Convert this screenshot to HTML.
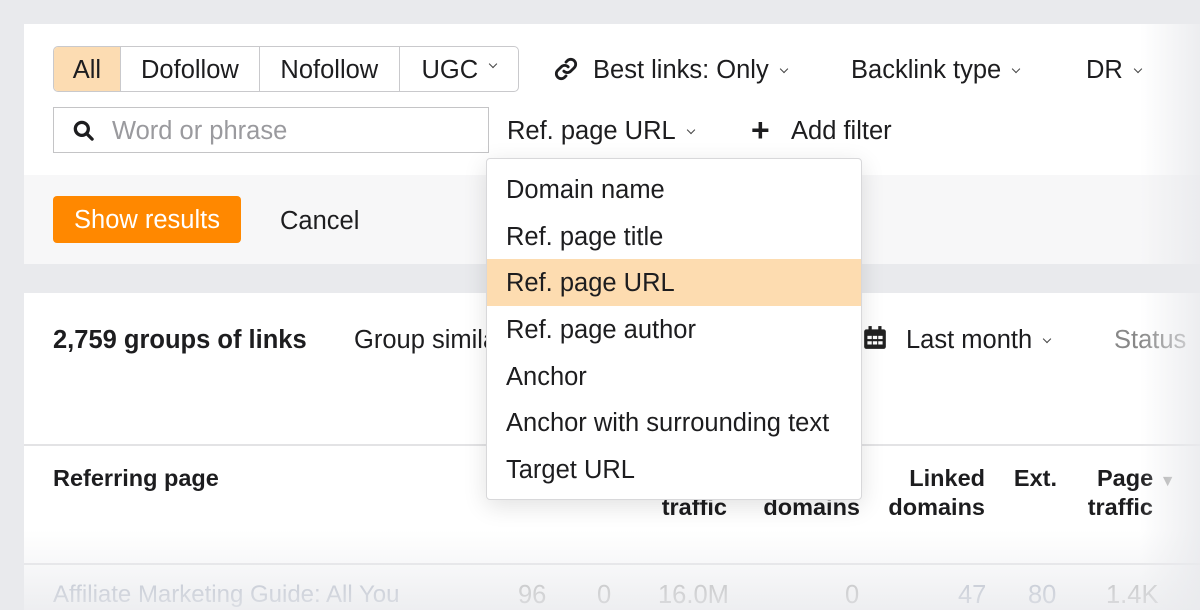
<!DOCTYPE html>
<html><head><meta charset="utf-8"><style>
*{box-sizing:border-box;margin:0;padding:0}
body{width:1200px;height:610px;overflow:hidden;background:#e9eaed;font-family:"Liberation Sans",sans-serif;color:#1d1d1f;position:relative;font-size:25.5px}
.abs{position:absolute;white-space:nowrap}
.p1{position:absolute;left:24px;top:24px;width:1176px;height:240px;background:#fff}
.p1b{position:absolute;left:24px;top:175px;width:1176px;height:89px;background:#f7f7f8}
.p2{position:absolute;left:24px;top:293px;width:1176px;height:317px;background:#fff}
.seg{position:absolute;left:53px;top:46px;height:46px;width:466px;border:1px solid #c9c9cc;border-radius:5px;display:flex;overflow:hidden}
.seg div{height:100%;display:flex;align-items:center;justify-content:center;border-right:1px solid #c9c9cc;padding-top:2px}
.search{position:absolute;left:53px;top:107px;width:436px;height:46px;border:1.5px solid #c4c4c6;background:#fff}
.btn{position:absolute;left:53px;top:196px;width:188px;height:47px;background:#ff8800;border-radius:4px;color:#fff;display:flex;align-items:center;justify-content:center;padding-top:2px}
.menu{position:absolute;left:486px;top:158px;width:376px;height:342px;background:#fff;border:1px solid #d8d8da;border-radius:4px;box-shadow:0 6px 24px rgba(0,0,0,.12)}
.menu div{height:46.7px;line-height:48px;padding-left:19px}
.chev{display:inline-block;width:6px;height:6px;border-right:1.8px solid #444;border-bottom:1.8px solid #444;transform:rotate(45deg);margin-left:12px;position:relative;top:-6px}
b{font-weight:bold}
.h{font-size:23.5px;font-weight:bold}
.r{text-align:right}
.fade{position:absolute;left:1140px;top:0;width:60px;height:610px;background:linear-gradient(90deg,rgba(233,234,237,0),rgba(233,234,237,.85))}
.bfade{position:absolute;left:0;top:530px;width:1200px;height:80px;background:linear-gradient(180deg,rgba(233,234,237,0),rgba(233,234,237,.8))}
</style></head><body>
<div class="p1"></div><div class="p1b"></div>
<div class="seg">
<div style="width:67px;background:#fcdcb2">All</div>
<div style="width:140px">Dofollow</div>
<div style="width:140px">Nofollow</div>
<div style="width:119px;border-right:none">UGC<span class="chev"></span></div>
</div>
<svg class="abs" style="left:553px;top:56px" width="26" height="26" viewBox="0 0 24 24" fill="none" stroke="#1d1d1f" stroke-width="2.6" stroke-linecap="round"><path d="M10 14a4.5 4.5 0 0 0 6.4 0l3.2-3.2a4.5 4.5 0 0 0-6.4-6.4l-1.2 1.2"/><path d="M14 10a4.5 4.5 0 0 0-6.4 0l-3.2 3.2a4.5 4.5 0 0 0 6.4 6.4l1.2-1.2"/></svg>
<div class="abs" style="left:593px;top:56px">Best links: Only<span class="chev"></span></div>
<div class="abs" style="left:851px;top:56px">Backlink type<span class="chev"></span></div>
<div class="abs" style="left:1086px;top:56px">DR<span class="chev"></span></div>
<div class="search"></div>
<svg class="abs" style="left:71px;top:118px" width="26" height="26" viewBox="0 0 24 24" fill="none" stroke="#1d1d1f" stroke-width="3"><circle cx="10" cy="10" r="6"/><path d="M14.5 14.5l5 5" stroke-linecap="round"/></svg>
<div class="abs" style="left:112px;top:117px;color:#9a9a9e">Word or phrase</div>
<div class="abs" style="left:507px;top:117px">Ref. page URL<span class="chev"></span></div>
<div class="abs" style="left:751px;top:113px;font-size:32px;font-weight:bold;line-height:34px">+</div>
<div class="abs" style="left:791px;top:117px">Add filter</div>
<div class="btn">Show results</div>
<div class="abs" style="left:280px;top:207px">Cancel</div>
<div class="p2"></div>
<div class="abs" style="left:53px;top:326px"><b>2,759 groups of links</b></div>
<div class="abs" style="left:354px;top:326px">Group similar</div>
<svg class="abs" style="left:862px;top:325px" width="26" height="26" viewBox="0 0 24 24"><rect x="2" y="4" width="20" height="18" rx="2" fill="#222"/><rect x="6" y="1" width="3" height="5" fill="#222"/><rect x="15" y="1" width="3" height="5" fill="#222"/><g fill="#fff"><rect x="5" y="10" width="4" height="3"/><rect x="10" y="10" width="4" height="3"/><rect x="15" y="10" width="4" height="3"/><rect x="5" y="15" width="4" height="3"/><rect x="10" y="15" width="4" height="3"/><rect x="15" y="15" width="4" height="3"/></g></svg>
<div class="abs" style="left:906px;top:326px">Last month<span class="chev"></span></div>
<div class="abs" style="left:1114px;top:326px;color:#888">Status</div>
<div class="abs" style="left:24px;top:444px;width:1176px;height:1.5px;background:#e3e3e5"></div>
<div class="abs h" style="left:53px;top:465px">Referring page</div>
<div class="abs h r" style="right:473px;top:494px">traffic</div>
<div class="abs h r" style="right:340px;top:494px">domains</div>
<div class="abs h r" style="right:215px;top:465px">Linked</div>
<div class="abs h r" style="right:215px;top:494px">domains</div>
<div class="abs h r" style="right:143px;top:465px">Ext.</div>
<div class="abs h" style="left:1097px;top:465px">Page <span style="color:#aaa;font-size:16px">▼</span></div>
<div class="abs h r" style="right:47px;top:494px">traffic</div>
<div class="abs" style="left:24px;top:563px;width:1176px;height:1.5px;background:#e6e6e8"></div>
<div class="abs" style="left:53px;top:581px;color:#a8b0c0;font-size:24px">Affiliate Marketing Guide: All You</div>
<div class="abs" style="left:518px;top:581px;color:#aaa">96</div>
<div class="abs" style="left:597px;top:581px;color:#aaa">0</div>
<div class="abs" style="left:658px;top:581px;color:#aaa">16.0M</div>
<div class="abs" style="left:845px;top:581px;color:#aaa">0</div>
<div class="abs" style="left:958px;top:581px;color:#a8b0c0">47</div>
<div class="abs" style="left:1028px;top:581px;color:#a8b0c0">80</div>
<div class="abs" style="left:1106px;top:581px;color:#aaa">1.4K</div>
<div class="bfade"></div>
<div class="menu">
<div style="margin-top:7px">Domain name</div>
<div>Ref. page title</div>
<div style="background:#fddcb0">Ref. page URL</div>
<div>Ref. page author</div>
<div>Anchor</div>
<div>Anchor with surrounding text</div>
<div>Target URL</div>
</div>
<div class="fade"></div>
</body></html>
